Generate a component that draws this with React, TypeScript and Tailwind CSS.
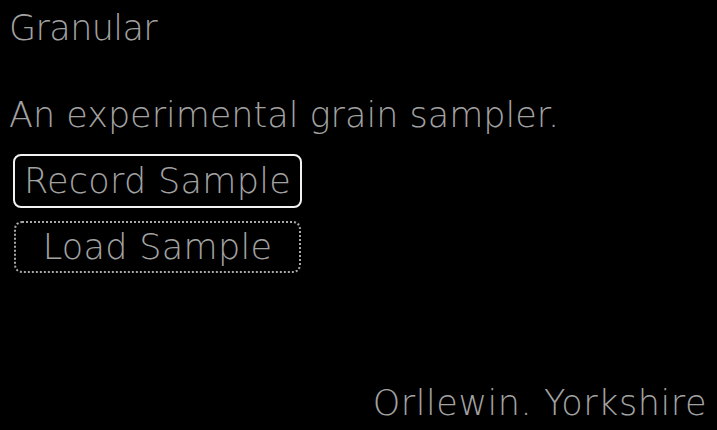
import React from "react";

export default function App() {
  const font = { fontFamily: '"DejaVu Sans", "Liberation Sans", sans-serif' };
  return (
    <div
      className="w-[717px] h-[430px] bg-black text-[#a2a2a2] flex flex-col pl-[9px] pt-[11px] pb-[9px] pr-[10px] overflow-hidden font-extralight"
      style={font}
    >
      <div className="text-[35px] leading-[35px] whitespace-nowrap tracking-[-0.6px]">Granular</div>
      <div className="text-[35px] leading-[35px] mt-[52px] whitespace-nowrap">
        An experimental grain sampler.
      </div>
      <button className="mt-[21px] ml-[4px] w-[289px] h-[54px] border-2 border-solid border-[#f2f2f2] rounded-[8px] text-[35px] leading-[35px] flex items-center justify-center whitespace-nowrap text-[#a2a2a2] font-extralight tracking-[0.3px]">
        Record Sample
      </button>
      <button className="mt-[13px] ml-[5px] w-[287px] h-[52px] border-2 border-dotted border-[#a8a8a8] rounded-[8px] text-[35px] leading-[35px] flex items-center justify-center whitespace-nowrap text-[#a2a2a2] font-extralight tracking-[0.3px]">
        Load Sample
      </button>
      <div className="mt-auto self-end text-[35px] leading-[35px] whitespace-nowrap tracking-[0.55px]">
        Orllewin. Yorkshire
      </div>
    </div>
  );
}
